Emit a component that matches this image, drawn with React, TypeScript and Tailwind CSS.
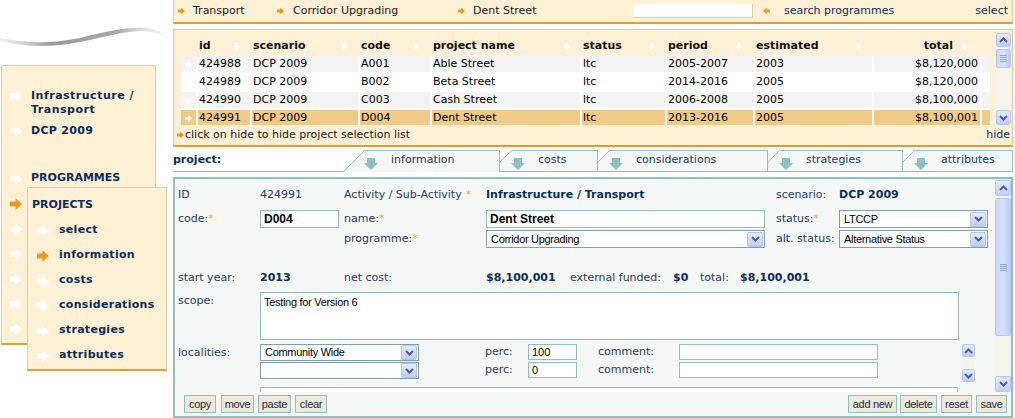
import React from 'react';

const DV = 'font-[family-name:DejaVu_Sans,Verdana,sans-serif]';
const LS = 'font-[family-name:Liberation_Sans,Arial,sans-serif]';

type Row = {
  cells: string[];
  bg: string;
};

const columns = [
  { label: '', w: 'w-[15px]' },
  { label: 'id', w: 'w-[52px]' },
  { label: 'scenario', w: 'w-[106px]' },
  { label: 'code', w: 'w-[70px]' },
  { label: 'project name', w: 'w-[148px]' },
  { label: 'status', w: 'w-[83px]' },
  { label: 'period', w: 'w-[86px]' },
  { label: 'estimated', w: 'w-[117px]' },
  { label: 'total', w: 'w-[106px]' },
  { label: '', w: 'w-[8px]' },
];

const rows: Row[] = [
  { cells: ['424988', 'DCP 2009', 'A001', 'Able Street', 'ltc', '2005-2007', '2003', '$8,120,000'], bg: 'bg-[#f3f3f3]' },
  { cells: ['424989', 'DCP 2009', 'B002', 'Beta Street', 'ltc', '2014-2016', '2005', '$8,120,000'], bg: 'bg-white' },
  { cells: ['424990', 'DCP 2009', 'C003', 'Cash Street', 'ltc', '2006-2008', '2005', '$8,100,000'], bg: 'bg-[#f3f3f3]' },
  { cells: ['424991', 'DCP 2009', 'D004', 'Dent Street', 'ltc', '2013-2016', '2005', '$8,100,001'], bg: 'bg-[#efc987]' },
];

const tabs = [
  { label: 'information', w: 157, active: true, z: 'z-[5]', ml: '' },
  { label: 'costs', w: 108, active: false, z: 'z-[4]', ml: '-ml-[10px]' },
  { label: 'considerations', w: 180, active: false, z: 'z-[3]', ml: '-ml-[10px]' },
  { label: 'strategies', w: 145, active: false, z: 'z-[2]', ml: '-ml-[10px]' },
  { label: 'attributes', w: 120, active: false, z: 'z-[1]', ml: '-ml-[10px]' },
];

const Arrow = ({ className = '' }: { className?: string }) => (
  <svg viewBox="0 0 12 12" className={className} fill="currentColor">
    <path d="M0 3.5h5.5V0L12 6l-6.5 6V8.5H0z" />
  </svg>
);

const DownTiny = () => (
  <svg viewBox="0 0 7 7" className="h-[7px] w-[7px] text-white" fill="currentColor">
    <path d="M2 0h3v3h2L3.5 7 0 3h2z" />
  </svg>
);

const TabArrow = () => (
  <svg viewBox="0 0 14 12" className="h-[12px] w-[14px] shrink-0 text-[#8fbfc2]" fill="currentColor">
    <path d="M3 0h8v5h3l-7 7-7-7h3z" />
  </svg>
);

const Chevron = ({ up }: { up?: boolean }) => (
  <svg viewBox="0 0 9 6" className="h-[6px] w-[9px]" fill="none" stroke="#4d6185" strokeWidth="2">
    <path d={up ? 'M1 5l3.5-3.5L8 5' : 'M1 1l3.5 3.5L8 1'} />
  </svg>
);

const XpBtn = ({ up, className = '' }: { up?: boolean; className?: string }) => (
  <div
    className={`flex shrink-0 items-center justify-center rounded-[2px] border border-[#b4c7f2] bg-gradient-to-b from-[#e3ebfe] to-[#bccdf9] ${className}`}
  >
    <Chevron up={up} />
  </div>
);

const Thumb = ({ className = '' }: { className?: string }) => (
  <div
    className={`flex shrink-0 flex-col items-center justify-center gap-[1px] rounded-[2px] border border-[#b4c7f2] bg-gradient-to-r from-[#c9d8fc] via-[#d6e1fd] to-[#bacbf8] ${className}`}
  >
    <div className="h-[1px] w-[7px] bg-[#8ea7e0]" />
    <div className="h-[1px] w-[7px] bg-[#8ea7e0]" />
    <div className="h-[1px] w-[7px] bg-[#8ea7e0]" />
    <div className="h-[1px] w-[7px] bg-[#8ea7e0]" />
  </div>
);

const Req = ({ space }: { space?: boolean }) => (
  <span className={`text-[#f2a422] ${space ? 'ml-[4px]' : ''}`}>*</span>
);

const Select = ({ value, className = '' }: { value: string; className?: string }) => (
  <div className={`flex items-center border border-[#7f9db9] bg-white ${className}`}>
    <span className={`flex-1 truncate pl-[4px] text-[11px] tracking-[-0.3px] text-black ${LS}`}>{value}</span>
    <XpBtn className="mr-[1px] h-[15px] w-[16px]" />
  </div>
);

const Button = ({ label, w }: { label: string; w: string }) => (
  <div
    className={`flex h-[18px] items-center justify-center border border-[#8fbfc2] bg-[#ece9d8] text-[11px] tracking-[-0.3px] text-[#1d2b45] ${LS} ${w}`}
  >
    {label}
  </div>
);

const Sidebar = () => {
  const subItems = ['select', 'information', 'costs', 'considerations', 'strategies', 'attributes'];
  return (
    <div className="relative h-full w-[173px] shrink-0 text-[11px] font-bold text-[#0b2d5b]">
      <svg width="173" height="65" viewBox="0 0 173 65" className="block">
        <defs>
          <linearGradient id="swoosh" x1="0" x2="1" y1="0" y2="0">
            <stop offset="0" stopColor="#cfcfcf" stopOpacity="0.3" />
            <stop offset="0.3" stopColor="#9b9b9b" />
            <stop offset="0.7" stopColor="#a8a8a8" />
            <stop offset="1" stopColor="#e4e4e4" stopOpacity="0.2" />
          </linearGradient>
        </defs>
        <path
          d="M0 38C25 43 50 44 80 38C105 32 125 27 145 28C158 29 165 34 170 40C160 33 150 31 140 31C120 32 100 38 80 42C50 48 25 47 0 41Z"
          fill="url(#swoosh)"
        />
      </svg>

      <div className="ml-[1px] h-[280px] w-[155px] border border-[#f1c68c] border-b-2 border-b-[#e89c33] bg-[#fef0d5] pl-[8px] pt-[23px]">
        <div className="flex">
          <Arrow className="mt-[1px] h-[12px] w-[12px] shrink-0 text-white" />
          <span className="ml-[9px] leading-[14px] tracking-[0.5px]">
            Infrastructure /<br />
            Transport
          </span>
        </div>
        <div className="mt-[7px] flex items-center">
          <Arrow className="h-[12px] w-[12px] shrink-0 text-white" />
          <span className="ml-[9px] leading-[14px] tracking-[0.3px]">DCP 2009</span>
        </div>
        <div className="h-[28px]" />
        <div className="flex h-[25px] items-center">
          <Arrow className="h-[12px] w-[12px] text-white" />
          <span className="ml-[9px]">PROGRAMMES</span>
        </div>
        <div className="flex h-[25px] items-center">
          <Arrow className="h-[12px] w-[12px] text-[#ea9a22]" />
        </div>
        {[0, 1, 2, 3, 4].map((i) => (
          <div key={i} className="flex h-[25px] items-center">
            <Arrow className="h-[12px] w-[12px] text-white" />
          </div>
        ))}
      </div>

      <div className="absolute left-[27px] top-[187px] h-[184px] w-[140px] border border-[#f1c68c] border-b-2 border-b-[#e89c33] bg-[#fef0d5] pl-[4px] pt-[4px]">
        <div className="flex h-[26px] items-center">PROJECTS</div>
        {subItems.map((item) => (
          <div key={item} className="flex h-[25px] items-center pl-[5px]">
            <Arrow className={`h-[12px] w-[12px] ${item === 'information' ? 'text-[#ea9a22]' : 'text-white'}`} />
            <span className="ml-[10px] tracking-[0.3px]">{item}</span>
          </div>
        ))}
      </div>
    </div>
  );
};

const Breadcrumb = () => (
  <div className="flex h-[24px] items-center border-x border-[#f1c68c] border-b-2 border-b-[#e69a2e] bg-[#fef0d5] text-[11px] text-[#1a1a1a]">
    <div className="flex w-[103px] items-center pl-[4px]">
      <Arrow className="h-[8px] w-[7px] text-[#ea9a22]" />
      <span className="ml-[8px]">Transport</span>
    </div>
    <div className="flex w-[181px] items-center">
      <Arrow className="h-[8px] w-[7px] text-[#ea9a22]" />
      <span className="ml-[9px]">Corridor Upgrading</span>
    </div>
    <div className="flex w-[175px] items-center">
      <Arrow className="h-[8px] w-[7px] text-[#ea9a22]" />
      <span className="ml-[8px]">Dent Street</span>
    </div>
    <div className="h-[14px] w-[120px] border-b border-r border-[#efc98f] bg-white" />
    <Arrow className="ml-[10px] h-[8px] w-[7px] rotate-180 text-[#ea9a22]" />
    <span className="ml-[14px] flex-1 text-[#0b2d5b]">search programmes</span>
    <span className="pr-[4px] text-[#0b2d5b]">select</span>
  </div>
);

const ProjectTable = () => (
  <div className="mt-[5px] flex h-[118px] flex-col border-x border-t border-[#f1c68c] border-b-2 border-b-[#e69a2e] bg-[#fef0d5] text-[11px]">
    <div className="mt-[3px] flex h-[92px]">
      <div className="ml-[3px] w-[819px] overflow-hidden pl-[4px] pt-[5px]">
        <div className="flex h-[16px] gap-[2px] font-bold text-[#111]">
          {columns.map((col, i) => (
            <div
              key={i}
              className={`flex shrink-0 items-center ${col.w} ${
                col.label === 'total' ? 'justify-end pr-[12px]' : 'justify-between pl-[1px] pr-[10px]'
              }`}
            >
              {col.label && <span>{col.label}</span>}
              {col.label && (
                <span className={col.label === 'total' ? 'ml-[8px]' : ''}>
                  <DownTiny />
                </span>
              )}
            </div>
          ))}
        </div>
        <div className="mt-[2px] flex w-[809px] flex-col gap-[2px] bg-white text-black">
          {rows.map((row) => (
            <div key={row.cells[0]} className="flex h-[16px] gap-[2px]">
              <div className={`flex w-[15px] shrink-0 items-center pl-[4px] ${row.bg}`}>
                <Arrow className="h-[7px] w-[7px] text-white" />
              </div>
              {row.cells.map((cell, i) => (
                <div
                  key={i}
                  className={`flex shrink-0 items-center ${columns[i + 1].w} ${row.bg} ${
                    i === 7 ? 'justify-end pr-[2px]' : 'pl-[1px]'
                  }`}
                >
                  {cell}
                </div>
              ))}
              <div className={`w-[8px] shrink-0 ${row.bg}`} />
            </div>
          ))}
        </div>
      </div>
      <div className="flex w-[15px] flex-col bg-[#f4f3ee]">
        <XpBtn up className="h-[14px] w-[15px]" />
        <Thumb className="mt-[2px] h-[19px] w-[15px]" />
        <div className="flex-1" />
        <XpBtn className="h-[15px] w-[15px]" />
      </div>
    </div>
    <div className="flex h-[20px] items-center pl-[3px] pr-[2px] text-[#1a1a1a]">
      <Arrow className="h-[8px] w-[7px] text-[#ea9a22]" />
      <span className="ml-[1px] flex-1">click on hide to hide project selection list</span>
      <span className="text-[#0b2d5b]">hide</span>
    </div>
  </div>
);

const Tabs = () => (
  <div className="mt-[3px] flex h-[22px] text-[11px] text-[#1b3a63]">
    <div className="w-[170px] shrink-0 border-b border-[#8fbfc2] pt-[3px] font-bold leading-[14px] text-[#0b2d5b]">
      project:
    </div>
    {tabs.map((tab) => (
      <div key={tab.label} className={`relative h-[22px] shrink-0 ${tab.z} ${tab.ml}`} style={{ width: tab.w }}>
        <svg className="absolute inset-0" width={tab.w} height="22" viewBox={`0 0 ${tab.w} 22`}>
          <polygon points={`0,22 21,0 ${tab.w},0 ${tab.w},22`} fill="#f5f7f7" />
          <polyline
            points={`0.5,21.5 21.5,0.5 ${tab.w - 0.5},0.5 ${tab.w - 0.5},22`}
            fill="none"
            stroke="#8fbfc2"
            strokeWidth="1"
          />
          {!tab.active && <line x1="0" y1="21.5" x2={tab.w} y2="21.5" stroke="#8fbfc2" strokeWidth="1" />}
        </svg>
        <div className="relative flex pl-[21px]">
          <div className="mt-[8px]">
            <TabArrow />
          </div>
          <span className="ml-[13px] mt-[3px] leading-[14px]">{tab.label}</span>
        </div>
      </div>
    ))}
  </div>
);

const ProjectForm = () => (
  <div className="mt-[5px] flex h-[241px] flex-col border-2 border-[#8fbfc2] bg-[#f5f7f7] text-[11px] text-[#1d3c66]">
    <div className="flex h-[213px]">
      <div className="flex-1 overflow-hidden pl-[3px]">
        <div className="mt-[8px] flex h-[16px] items-center">
          <div className="w-[82px]">ID</div>
          <div className="w-[84px]">424991</div>
          <div className="w-[142px]">
            Activity / Sub-Activity
            <Req space />
          </div>
          <div className="w-[290px] font-bold text-[#0b2d5b]">Infrastructure / Transport</div>
          <div className="w-[63px]">scenario:</div>
          <div className="font-bold text-[#0b2d5b]">DCP 2009</div>
        </div>

        <div className="mt-[7px] flex h-[18px] items-center">
          <div className="w-[82px]">
            code:
            <Req />
          </div>
          <div className="w-[84px]">
            <div className={`flex h-[18px] w-[79px] items-center border border-[#8fbfc2] bg-white pl-[3px] text-[12px] font-bold text-black ${LS}`}>
              D004
            </div>
          </div>
          <div className="w-[142px]">
            name:
            <Req />
          </div>
          <div className="w-[290px]">
            <div className={`flex h-[18px] w-[279px] items-center border border-[#8fbfc2] bg-white pl-[3px] text-[12px] font-bold text-black ${LS}`}>
              Dent Street
            </div>
          </div>
          <div className="w-[63px]">
            status:
            <Req />
          </div>
          <Select value="LTCCP" className="h-[18px] w-[149px]" />
        </div>

        <div className="mt-[2px] flex h-[18px] items-center">
          <div className="w-[166px]" />
          <div className="w-[142px]">
            programme:
            <Req />
          </div>
          <div className="w-[290px]">
            <Select value="Corridor Upgrading" className="h-[18px] w-[279px]" />
          </div>
          <div className="w-[63px]">alt. status:</div>
          <Select value="Alternative Status" className="h-[18px] w-[149px]" />
        </div>

        <div className="mt-[22px] flex h-[16px] items-center">
          <div className="w-[82px]">start year:</div>
          <div className="w-[84px] font-bold text-[#0b2d5b]">2013</div>
          <div className="w-[142px]">net cost:</div>
          <div className="w-[84px] font-bold text-[#0b2d5b]">$8,100,001</div>
          <div className="w-[103px]">external funded:</div>
          <div className="w-[27px] font-bold text-[#0b2d5b]">$0</div>
          <div className="w-[40px]">total:</div>
          <div className="font-bold text-[#0b2d5b]">$8,100,001</div>
        </div>

        <div className="mt-[6px] flex h-[48px]">
          <div className="w-[82px] pt-[1px]">scope:</div>
          <div className={`h-[48px] w-[699px] border border-[#8fbfc2] bg-white pl-[3px] pt-[1px] text-[11px] tracking-[-0.3px] text-black ${LS}`}>
            Testing for Version 6
          </div>
        </div>

        <div className="mt-[4px] flex h-[38px]">
          <div className="w-[82px] pt-[1px]">localities:</div>
          <div className="flex w-[159px] flex-col gap-[1px]">
            <Select value="Community Wide" className="h-[17px] w-[159px]" />
            <Select value="" className="h-[17px] w-[159px]" />
          </div>
          <div className="ml-[66px] flex flex-col gap-[2px]">
            {['100', '0'].map((v) => (
              <div key={v} className="flex h-[16px] items-center">
                <div className="w-[43px]">perc:</div>
                <div className={`flex h-[16px] w-[49px] items-center border border-[#8fbfc2] bg-white pl-[3px] text-black ${LS}`}>
                  {v}
                </div>
                <div className="ml-[21px] w-[81px]">comment:</div>
                <div className="h-[16px] w-[199px] border border-[#8fbfc2] bg-white" />
              </div>
            ))}
          </div>
          <div className="ml-[84px] flex h-[38px] w-[13px] flex-col bg-[#f4f3ee]">
            <XpBtn up className="h-[13px] w-[13px]" />
            <div className="flex-1" />
            <XpBtn className="h-[13px] w-[13px]" />
          </div>
        </div>

        <div className="ml-[82px] mt-[5px] h-[20px] w-[698px] border border-[#8fbfc2] bg-white" />
      </div>

      <div className="flex w-[16px] flex-col bg-[#f4f3ee] pt-[1px]">
        <XpBtn up className="h-[16px] w-[16px]" />
        <Thumb className="mt-[2px] h-[138px] w-[16px]" />
        <div className="flex-1" />
        <XpBtn className="h-[16px] w-[16px]" />
      </div>
    </div>

    <div className="flex h-[24px] items-center justify-between pl-[9px] pr-[4px]">
      <div className="flex gap-[4px]">
        <Button label="copy" w="w-[32px]" />
        <Button label="move" w="w-[33px] ml-[1px]" />
        <Button label="paste" w="w-[33px]" />
        <Button label="clear" w="w-[32px]" />
      </div>
      <div className="flex gap-[4px]">
        <Button label="add new" w="w-[49px] mr-[-1px]" />
        <Button label="delete" w="w-[37px]" />
        <Button label="reset" w="w-[31px]" />
        <Button label="save" w="w-[31px]" />
      </div>
    </div>
  </div>
);

export default function App() {
  return (
    <div className={`flex h-[418px] w-[1015px] overflow-hidden bg-white ${DV}`}>
      <Sidebar />
      <div className="flex w-[840px] shrink-0 flex-col">
        <Breadcrumb />
        <ProjectTable />
        <Tabs />
        <ProjectForm />
      </div>
    </div>
  );
}
